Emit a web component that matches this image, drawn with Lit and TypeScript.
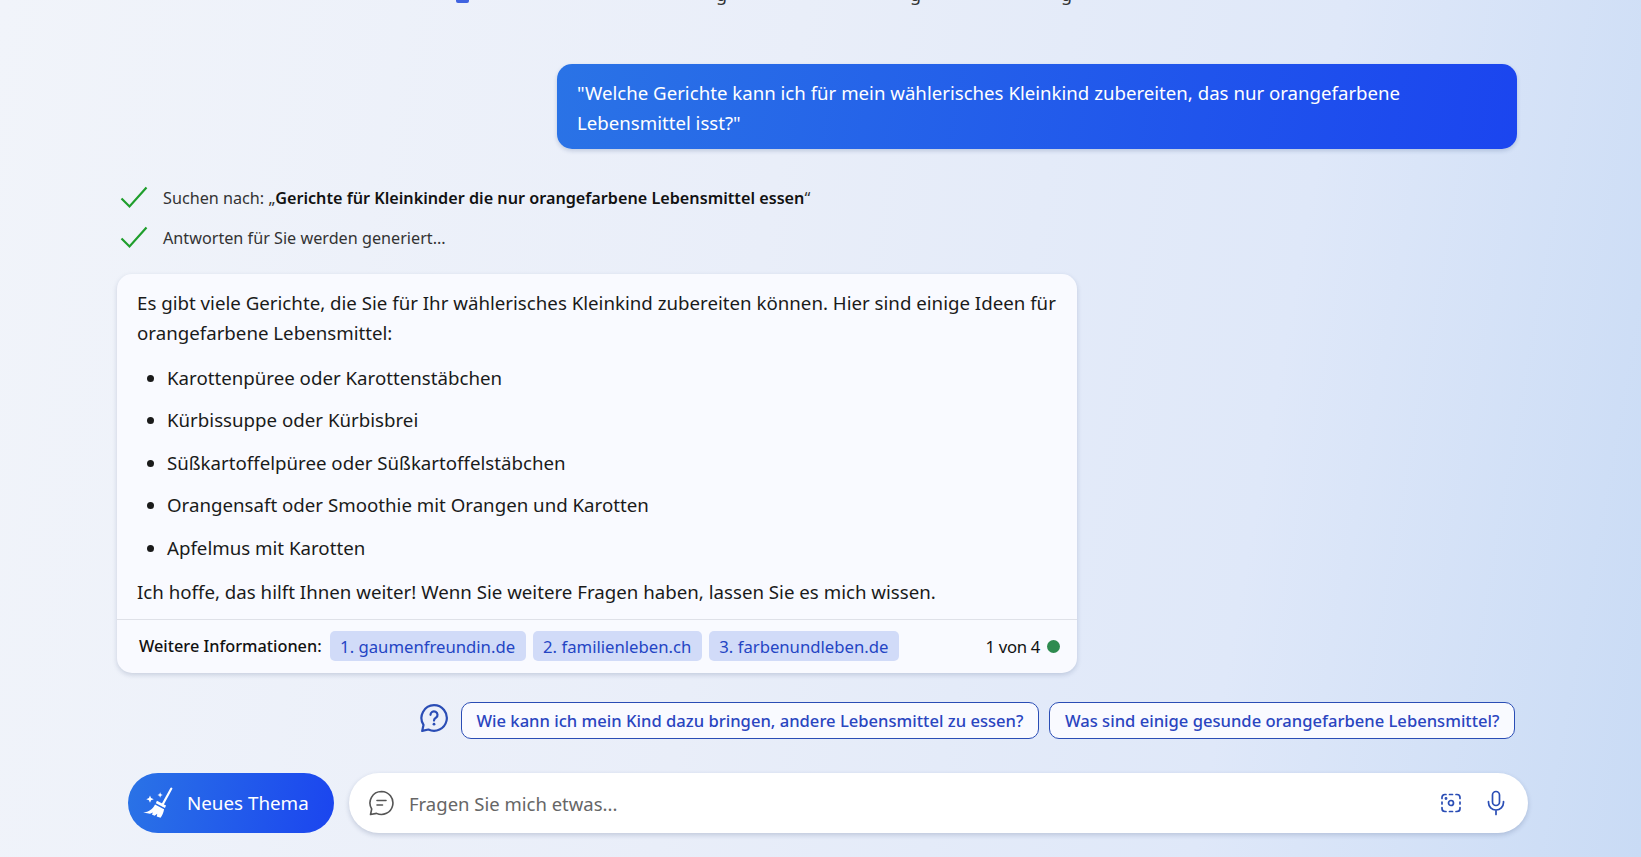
import { LitElement, html, css, svg } from "lit";
import { customElement } from "lit/decorators.js";

const check = svg`<svg class="check" viewBox="0 0 30 24" width="30" height="24"><path d="M2.5 13.5 L10.5 21.5 L27.5 2.5" fill="none" stroke="#1f9e2c" stroke-width="2.200"/></svg>`;

@customElement("app-root")
export class AppRoot extends LitElement {
  static styles = css`
    :host {
      display: block;
      width: 1641px;
      height: 857px;
      overflow: hidden;
      font-family: "Noto Sans", "Open Sans", "Liberation Sans", sans-serif;
      color: #1a1a1a;
      background: linear-gradient(100deg, #f1f4fa 0%, #e9eef9 45%, #dfe8f9 75%, #c9dbf5 100%);
    }
    .page {
      display: flex;
      flex-direction: column;
      height: 857px;
      padding: 0 124px 0 117px;
      box-sizing: border-box;
    }
    .clip {
      height: 64px;
      flex: none;
      display: flex;
      align-items: flex-start;
      overflow: hidden;
      padding-left: 339px;
    }
    .blue-mark {
      flex: none;
      width: 13px;
      height: 3px;
      background: #3f63e0;
      border-radius: 0 0 2px 2px;
    }
    .g {
      flex: none;
      font-size: 18px;
      line-height: 20px;
      margin-top: -16px;
      color: #333;
      width: 10px;
    }
    .g1 { margin-left: 247px; }
    .g2 { margin-left: 184px; }
    .g3 { margin-left: 141px; }
    .user-row {
      display: flex;
      justify-content: flex-end;
    }
    .user {
      width: 960px;
      height: 85px;
      box-sizing: border-box;
      padding: 14px 20px;
      border-radius: 15px;
      color: #fff;
      font-size: 18.65px;
      line-height: 30px;
      background: linear-gradient(100deg, #2a73e6 0%, #1b45ef 100%);
      box-shadow: 0 2px 4px rgba(30, 60, 120, 0.2);
    }
    .status {
      display: flex;
      align-items: center;
      gap: 14px;
      height: 40px;
      padding-left: 2px;
      font-size: 16.2px;
      color: #333;
    }
    .status span { padding-top: 1px; }
    .status b {
      font-weight: 600;
      color: #111;
    }
    .check { flex: none; }
    .steps { margin-top: 28px; }
    .card {
      width: 960px;
      margin-top: 17px;
      background: #f9faff;
      border-radius: 15px;
      box-shadow: 0 2px 5px rgba(30, 50, 100, 0.18);
    }
    .body {
      padding: 14px 20px 12px;
      font-size: 18.7px;
      line-height: 30px;
    }
    .body p { margin: 0; }
    .body ul {
      margin: 15px 0 14px;
      padding: 0 0 0 30px;
    }
    .body li { margin-bottom: 12.4px; }
    .body li:last-child { margin-bottom: 0; }
    .foot {
      display: flex;
      align-items: center;
      height: 54px;
      box-sizing: border-box;
      padding: 0 17px 0 22px;
      border-top: 1px solid #dfe1e8;
      font-size: 16.7px;
      gap: 7px;
    }
    .foot .label { font-weight: 500; font-size: 16.3px; margin-right: 1px; color: #111; }
    .chip {
      display: inline-flex;
      align-items: center;
      height: 30px;
      padding: 0 10.5px;
      background: #d1dbf8;
      border-radius: 5px;
      color: #2445c4;
    }
    .count {
      margin-left: auto;
      display: flex;
      align-items: center;
      gap: 7px;
      color: #111;
      letter-spacing: -0.3px;
    }
    .dot {
      width: 13px;
      height: 13px;
      border-radius: 50%;
      background: #2e8b4f;
    }
    .suggest {
      display: flex;
      justify-content: flex-end;
      align-items: center;
      gap: 10.5px;
      margin-top: 29px;
      padding-right: 2px;
    }
    .pill {
      display: flex;
      align-items: center;
      height: 37px;
      box-sizing: border-box;
      padding: 0 14.5px;
      border: 1px solid #2a4db5;
      border-radius: 10px;
      background: #f9faff;
      color: #2a45c0;
      font-size: 16.6px;
      font-weight: 500;
    }
    .q { margin: 0 1px 4px 0; }
    .bar {
      display: flex;
      gap: 15px;
      margin-top: 34px;
      padding-left: 11px;
      margin-right: -11px;
    }
    .new {
      flex: none;
      width: 206px;
      height: 60px;
      box-sizing: border-box;
      border-radius: 30px;
      display: flex;
      align-items: center;
      gap: 13px;
      padding-left: 14px;
      color: #fff;
      font-size: 18.8px;
      background: linear-gradient(100deg, #2a73e6 0%, #1b45ef 100%);
    }
    .new span, .input .ph { padding-top: 1px; }
    .input {
      flex: 1;
      height: 60px;
      box-sizing: border-box;
      border-radius: 30px;
      background: #fff;
      box-shadow: 0 2px 5px rgba(30, 50, 100, 0.2);
      display: flex;
      align-items: center;
      padding: 0 21px 0 19px;
      color: #666;
      font-size: 18.5px;
    }
    .input .ph { margin-left: 15px; flex: 1; }
    .input .cam { margin-right: 23px; }
  `;

  render() {
    return html`<div class="page">
      <div class="clip"><div class="blue-mark"></div><span class="g g1">g</span><span class="g g2">g</span><span class="g g3">g</span></div>
      <div class="user-row">
        <div class="user">"Welche Gerichte kann ich für mein wählerisches Kleinkind zubereiten, das nur orangefarbene Lebensmittel isst?"</div>
      </div>
      <div class="steps">
        <div class="status">${check}<span>Suchen nach: „<b>Gerichte für Kleinkinder die nur orangefarbene Lebensmittel essen</b>“</span></div>
        <div class="status">${check}<span>Antworten für Sie werden generiert...</span></div>
      </div>
      <div class="card">
        <div class="body">
          <p>Es gibt viele Gerichte, die Sie für Ihr wählerisches Kleinkind zubereiten können. Hier sind einige Ideen für orangefarbene Lebensmittel:</p>
          <ul>
            <li>Karottenpüree oder Karottenstäbchen</li>
            <li>Kürbissuppe oder Kürbisbrei</li>
            <li>Süßkartoffelpüree oder Süßkartoffelstäbchen</li>
            <li>Orangensaft oder Smoothie mit Orangen und Karotten</li>
            <li>Apfelmus mit Karotten</li>
          </ul>
          <p>Ich hoffe, das hilft Ihnen weiter! Wenn Sie weitere Fragen haben, lassen Sie es mich wissen.</p>
        </div>
        <div class="foot">
          <span class="label">Weitere Informationen:</span>
          <span class="chip">1. gaumenfreundin.de</span>
          <span class="chip">2. familienleben.ch</span>
          <span class="chip">3. farbenundleben.de</span>
          <span class="count">1 von 4 <span class="dot"></span></span>
        </div>
      </div>
      <div class="suggest">
        <svg class="q" viewBox="0 0 30 30" width="30" height="30"><path d="M15 2.200a12.800 12.800 0 1 1-5.600 24.300l-6.200 1.400 1.300-6A12.800 12.800 0 0 1 15 2.200Z" fill="none" stroke="#2a4db5" stroke-width="2.200" stroke-linejoin="round"/><path d="M11.500 11.800a3.500 3.500 0 1 1 5.600 2.800c-1.200.9-2.100 1.500-2.100 3" fill="none" stroke="#2a4db5" stroke-width="2.200" stroke-linecap="round"/><circle cx="15" cy="21.200" r="1.400" fill="#2a4db5"/></svg>
        <div class="pill">Wie kann ich mein Kind dazu bringen, andere Lebensmittel zu essen?</div>
        <div class="pill">Was sind einige gesunde orangefarbene Lebensmittel?</div>
      </div>
      <div class="bar">
        <div class="new">
          <svg viewBox="0 0 30 30" width="32" height="32"><path d="M27.500 1.500 19 17" stroke="#fff" stroke-width="2" stroke-linecap="round" fill="none"/><path d="M14 12.800 22.500 17.300l-1 2.400L13 15.200Z" fill="#fff"/><path d="M12.200 16.500l8.500 4.400c-.5 3-1.800 6-3.300 8l-3.600-1.300.5-2.500-2.500 1.900-2.500-1.200 1-1.900-2.800 1.200L1 24c5.500-.5 9-3 11.200-7.500Z" fill="#fff"/><path d="M7.500 8l1 2.400 2.500 1-2.500 1-1 2.400-1-2.400-2.500-1 2.500-1Z M17 5l.7 1.700L19.500 7.500l-1.800.7L17 10l-.7-1.800-1.800-.7 1.800-.8Z" fill="#fff"/></svg>
          <span>Neues Thema</span>
        </div>
        <div class="input">
          <svg viewBox="0 0 26 26" width="26" height="26"><path d="M13.500 1.500a11.500 11.500 0 1 1-5 21.900L2.500 24.500l1.200-5.500A11.500 11.500 0 0 1 13.500 1.500Z" fill="none" stroke="#555" stroke-width="1.600" stroke-linejoin="round"/><path d="M9 10.500h9M9 15h5.500" stroke="#555" stroke-width="1.600" stroke-linecap="round"/></svg>
          <span class="ph">Fragen Sie mich etwas...</span>
          <svg class="cam" viewBox="0 0 22 22" width="22" height="22" fill="none" stroke="#2a4db5" stroke-width="1.700" stroke-linecap="round"><path d="M6 2.500H5A3 3 0 0 0 2 5.500v1M16 2.500h1a3 3 0 0 1 3 3v1M2 15.500v1a3 3 0 0 0 3 3h1M20 15.500v1a3 3 0 0 1-3 3h-1M9.500 2.500h3M9.500 19.500h3M2 10v2M20 10v2"/><circle cx="11" cy="11" r="2.500"/><circle cx="6" cy="6.500" r=".6" fill="#2a4db5"/></svg>
          <svg viewBox="0 0 22 26" width="22" height="26" fill="none" stroke="#2a4db5" stroke-width="1.700" stroke-linecap="round"><rect x="7.500" y="1.500" width="7" height="14" rx="3.500"/><path d="M3.500 11.500v1a7.500 7.500 0 0 0 15 0v-1M11 20v4.500"/></svg>
        </div>
      </div>
    </div>`;
  }
}
